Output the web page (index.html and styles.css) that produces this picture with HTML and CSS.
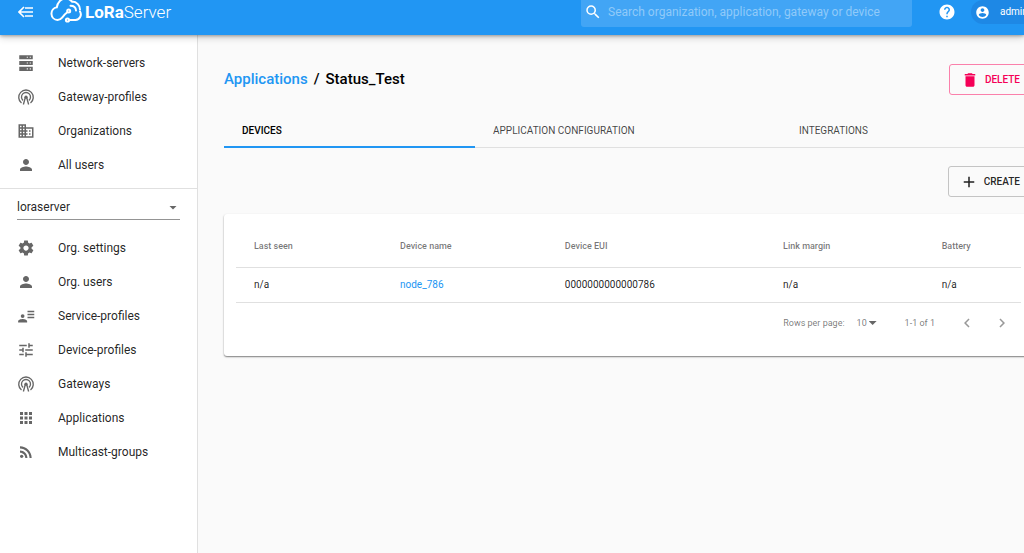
FILE: index.html
```html
<!DOCTYPE html>
<html lang="en">
<head>
<meta charset="utf-8">
<title>LoRaServer</title>
<link rel="stylesheet" href="styles.css">
</head>
<body>
<svg class="symbols" aria-hidden="true">
<symbol id="server" viewBox="0 0 24 24"><path fill-rule="evenodd" d="M3 1.500h18v5.500H3zM3 9.200h18v5.500H3zM3 17h18v5.500H3zM13 3.500v1.500h1.500V3.500zm4 0v1.500h1.500V3.500zM13 11.200v1.500h1.500v-1.500zm4 0v1.500h1.500v-1.500zM13 19v1.500h1.500V19zm4 0v1.500h1.500V19z"/></symbol>
<symbol id="radio" viewBox="0 0 24 24"><path d="M6 20A9.700 9.700 0 1 1 18 20M8 16.500A6 6 0 1 1 16 16.500M8.500 22l2.500-9M15.500 22L13 13" fill="none" stroke="currentColor" stroke-width="1.800"/><circle cx="12" cy="12.200" r="2.200"/></symbol>
<symbol id="building" viewBox="0 0 24 24"><path d="M12 7V3H2v18h20V7H12zM6 19H4v-2h2v2zm0-4H4v-2h2v2zm0-4H4V9h2v2zm0-4H4V5h2v2zm4 12H8v-2h2v2zm0-4H8v-2h2v2zm0-4H8V9h2v2zm0-4H8V5h2v2zm10 12h-8v-2h2v-2h-2v-2h2v-2h-2V9h8v10zm-2-8h-2v2h2v-2zm0 4h-2v2h2v-2z"/></symbol>
<symbol id="person" viewBox="0 0 24 24"><path d="M12 12c2.210 0 4-1.790 4-4s-1.790-4-4-4-4 1.790-4 4 1.790 4 4 4zm0 2c-2.670 0-8 1.340-8 4v2h16v-2c0-2.660-5.330-4-8-4z"/></symbol>
<symbol id="gear" viewBox="0 0 24 24"><path d="M19.430 12.980c.04-.32.07-.64.07-.98s-.03-.66-.07-.98l2.110-1.650c.19-.15.24-.42.12-.64l-2-3.460c-.12-.22-.39-.3-.61-.22l-2.490 1c-.52-.4-1.080-.73-1.690-.98l-.38-2.650C14.460 2.180 14.250 2 14 2h-4c-.25 0-.46.18-.49.42l-.38 2.650c-.61.25-1.170.59-1.690.98l-2.490-1c-.23-.09-.49 0-.61.22l-2 3.460c-.13.22-.07.49.12.64l2.110 1.650c-.04.32-.07.65-.07.98s.03.66.07.98l-2.110 1.650c-.19.15-.24.42-.12.64l2 3.460c.12.22.39.3.61.22l2.490-1c.52.4 1.080.73 1.690.98l.38 2.650c.03.24.24.42.49.42h4c.25 0 .46-.18.49-.42l.38-2.650c.61-.25 1.170-.59 1.690-.98l2.490 1c.23.09.49 0 .61-.22l2-3.460c.12-.22.07-.49-.12-.64l-2.110-1.650zM12 15.500c-1.930 0-3.500-1.570-3.500-3.500s1.570-3.500 3.500-3.500 3.500 1.570 3.500 3.500-1.570 3.500-3.500 3.500z"/></symbol>
<symbol id="account" viewBox="0 0 24 24"><circle cx="7.500" cy="12" r="2.500"/><path d="M1.500 20.500v-1.500c0-2 4-3 6-3s6 1 6 3v1.500zM14 5h9v2h-9zm0 4h9v2h-9zm0 4h9v2h-9z"/></symbol>
<symbol id="tune" viewBox="0 0 24 24"><path d="M3 17v2h6v-2H3zM3 5v2h10V5H3zm10 16v-2h8v-2h-8v-2h-2v6h2zM7 9v2H3v2h4v2h2V9H7zm14 4v-2H11v2h10zm-6-4h2V7h4V5h-4V3h-2v6z"/></symbol>
<symbol id="apps" viewBox="0 0 24 24"><path d="M4 8h4V4H4v4zm6 12h4v-4h-4v4zm-6 0h4v-4H4v4zm0-6h4v-4H4v4zm6 0h4v-4h-4v4zm6-10v4h4V4h-4zm-6 4h4V4h-4v4zm6 6h4v-4h-4v4zm0 6h4v-4h-4v4z"/></symbol>
<symbol id="feed" viewBox="0 0 24 24"><circle cx="6.180" cy="17.820" r="2.180"/><path d="M4 4.440v2.830c7.030 0 12.730 5.700 12.730 12.730h2.830c0-8.590-6.970-15.560-15.560-15.560zm0 5.660v2.830c3.900 0 7.070 3.170 7.070 7.070h2.830c0-5.470-4.430-9.900-9.900-9.900z"/></symbol>
</svg>
<header class="topbar">
  <button class="icon-button" aria-label="Toggle menu"><svg class="menu-icon outline" viewBox="0 0 16 12"><path d="M6 1L1 6l5 5M1.500 6H15M7 2h8M7 10h8" stroke-width="1.600"/></svg></button>
  <a class="brand" href="#">
    <svg class="brand-mark outline" viewBox="0 0 32 24" stroke-width="2" stroke-linecap="round"><path d="M7.500 20A6.400 6.400 0 0 1 6.800 7.300C7.500 2.500 11 -1.500 15.500 -1.500C18.500 -1.500 20.500 -.4 22 1.600M7.500 20C10.500 20 11 19 12.500 17.200C13.500 15.500 14 14.800 17.300 12.300M19.500 20H25.500A5.600 5.600 0 0 0 30 11.500M22 1.600C27 1.800 30 5.500 30 9.500M20.500 5.800C23.500 5.800 25.800 7.500 26 10.500"/><circle cx="18.700" cy="11" r="1.500"/><circle cx="17.500" cy="20" r="1.600"/></svg>
    <span class="brand-name"><b>LoRa</b>Server</span>
  </a>
  <label class="search">
    <svg class="search-icon" viewBox="0 0 24 24"><path d="M15.500 14h-.79l-.28-.27A6.470 6.470 0 0 0 16 9.500 6.500 6.500 0 1 0 9.500 16c1.610 0 3.090-.59 4.230-1.570l.27.28v.79l5 4.990L20.490 19l-4.990-5zm-6 0C7.010 14 5 11.990 5 9.500S7.010 5 9.500 5 14 7.010 14 9.500 11.990 14 9.500 14z"/></svg>
    <input class="search-input" type="text" aria-label="Search" placeholder="Search organization, application, gateway or device">
  </label>
  <button class="icon-button help" aria-label="Help"><svg class="icon" viewBox="0 0 24 24"><path d="M12 2C6.480 2 2 6.480 2 12s4.480 10 10 10 10-4.480 10-10S17.520 2 12 2zm1 17h-2v-2h2v2zm2.070-7.750l-.9.920C13.450 12.900 13 13.500 13 15h-2v-.5c0-1.100.45-2.100 1.170-2.830l1.240-1.260c.37-.36.59-.86.59-1.410 0-1.100-.9-2-2-2s-2 .9-2 2H8c0-2.210 1.790-4 4-4s4 1.790 4 4c0 .88-.36 1.680-.93 2.250z"/></svg></button>
  <button class="user-chip"><svg class="user-icon" viewBox="0 0 24 24"><path d="M12 2C6.480 2 2 6.480 2 12s4.480 10 10 10 10-4.480 10-10S17.520 2 12 2zm0 3c1.660 0 3 1.340 3 3s-1.340 3-3 3-3-1.340-3-3 1.340-3 3-3zm0 14.200c-2.500 0-4.710-1.280-6-3.220.03-1.990 4-3.080 6-3.080 1.990 0 5.970 1.090 6 3.080-1.290 1.940-3.500 3.220-6 3.220z"/></svg>admin</button>
</header>
<div class="layout">
  <nav class="sidebar">
    <div class="nav-group">
      <a class="nav-item" href="#"><svg class="icon"><use href="#server"/></svg>Network-servers</a>
      <a class="nav-item" href="#"><svg class="icon"><use href="#radio"/></svg>Gateway-profiles</a>
      <a class="nav-item" href="#"><svg class="icon"><use href="#building"/></svg>Organizations</a>
      <a class="nav-item" href="#"><svg class="icon"><use href="#person"/></svg>All users</a>
    </div>
    <div class="org-picker"><select class="org-select" aria-label="Organization"><option>loraserver</option></select><span class="caret"></span></div>
    <div class="nav-group">
      <a class="nav-item" href="#"><svg class="icon"><use href="#gear"/></svg>Org. settings</a>
      <a class="nav-item" href="#"><svg class="icon"><use href="#person"/></svg>Org. users</a>
      <a class="nav-item" href="#"><svg class="icon"><use href="#account"/></svg>Service-profiles</a>
      <a class="nav-item" href="#"><svg class="icon"><use href="#tune"/></svg>Device-profiles</a>
      <a class="nav-item" href="#"><svg class="icon"><use href="#radio"/></svg>Gateways</a>
      <a class="nav-item" href="#"><svg class="icon"><use href="#apps"/></svg>Applications</a>
      <a class="nav-item" href="#"><svg class="icon"><use href="#feed"/></svg>Multicast-groups</a>
    </div>
  </nav>
  <main class="main">
    <div class="title-bar">
      <h1 class="title"><a class="link" href="#">Applications</a><span>/</span><span>Status_Test</span></h1>
      <button class="button danger"><svg class="icon" viewBox="0 0 24 24"><path d="M6 19c0 1.100.9 2 2 2h8c1.100 0 2-.9 2-2V7H6v12zM19 4h-3.500l-1-1h-5l-1 1H5v2h14V4z"/></svg>DELETE</button>
    </div>
    <div class="tabs" role="tablist">
      <button class="tab active" role="tab">DEVICES</button>
      <button class="tab wide" role="tab">APPLICATION CONFIGURATION</button>
      <button class="tab" role="tab">INTEGRATIONS</button>
    </div>
    <div class="actions"><button class="button"><svg class="icon" viewBox="0 0 24 24"><path d="M19 13h-6v6h-2v-6H5v-2h6V5h2v6h6v2z"/></svg>CREATE</button></div>
    <section class="card">
      <table class="table">
        <thead><tr><th class="col-seen">Last seen</th><th class="col-name">Device name</th><th class="col-eui">Device EUI</th><th class="col-margin">Link margin</th><th class="col-battery">Battery</th></tr></thead>
        <tbody><tr><td>n/a</td><td><a class="link" href="#">node_786</a></td><td>0000000000000786</td><td>n/a</td><td>n/a</td></tr></tbody>
      </table>
      <div class="pager">
        <label for="rows">Rows per page:</label>
        <div class="rows-picker"><select class="rows-select" id="rows"><option>10</option></select><span class="caret"></span></div>
        <span class="range">1-1 of 1</span>
        <button class="icon-button" aria-label="Previous page"><svg class="icon" viewBox="0 0 24 24"><path d="M15.410 7.410L14 6l-6 6 6 6 1.410-1.410L10.830 12z"/></svg></button>
        <button class="icon-button" aria-label="Next page"><svg class="icon" viewBox="0 0 24 24"><path d="M10 6L8.590 7.410 13.170 12l-4.580 4.590L10 18l6-6z"/></svg></button>
      </div>
    </section>
  </main>
</div>
</body>
</html>
```
FILE: styles.css
```css
* { box-sizing: border-box; }
body {
  margin: 0;
  min-height: 100vh;
  display: flex;
  flex-direction: column;
  overflow: hidden;
  background: #fafafa;
  color: rgba(0, 0, 0, 0.87);
  font: 12px/16px Roboto, "Liberation Sans", sans-serif;
}
button, input, select { font: inherit; color: inherit; }
button { cursor: pointer; }
a { color: inherit; text-decoration: none; }
svg { fill: currentColor; flex: none; display: block; }
.outline { fill: none; stroke: currentColor; }
.symbols { position: absolute; width: 0; height: 0; }
.icon { width: 18px; height: 18px; }
.link { color: #2196f3; }
.icon-button { display: flex; padding: 0; border: 0; background: none; }

.topbar {
  position: relative;
  z-index: 1;
  display: flex;
  align-items: center;
  height: 35px;
  padding: 0 0 11px 18px;
  background: #2196f3;
  color: #fff;
  box-shadow: 0 1px 3px rgba(0, 0, 0, 0.3), 0 3px 7px rgba(0, 0, 0, 0.16);
}
.menu-icon { width: 16px; height: 12px; }
.brand { display: flex; align-items: center; gap: 3px; margin-left: 16px; }
.brand-mark { width: 32px; height: 24px; }
.brand-name { font-size: 17px; line-height: 24px; font-weight: 300; }
.brand-name b { font-weight: 700; }
.search {
  display: flex;
  align-items: center;
  gap: 6px;
  width: 331px;
  height: 30px;
  margin-left: auto;
  padding-left: 3px;
  border-radius: 3px;
  background: #42a5f5;
}
.search-icon { width: 18px; height: 18px; }
.search-input { flex: 1; min-width: 0; padding: 0; border: 0; outline: 0; background: none; }
.search-input::placeholder { color: #90caf9; opacity: 1; }
.help { margin-left: 26px; }
.user-chip {
  display: flex;
  align-items: center;
  gap: 10px;
  width: 76px;
  height: 24px;
  margin: 0 -23px 0 15px;
  padding: 0 4px;
  border: 0;
  border-radius: 12px;
  background: #1e88e5;
  font-size: 10px;
}
.user-icon { width: 15px; height: 15px; }

.layout { display: flex; flex: 1; }
.sidebar { flex: none; width: 198px; background: #fff; border-right: 1px solid #e0e0e0; }
.nav-group { padding: 11px 0 6px; }
.nav-item { display: flex; align-items: center; gap: 23px; height: 34px; padding-left: 17px; }
.nav-item .icon { color: #666; }
.org-picker {
  display: flex;
  align-items: center;
  padding: 6px 17px 0;
  border-top: 1px solid #e0e0e0;
}
.org-select {
  flex: 1;
  height: 25px;
  padding: 0;
  appearance: none;
  border: 0;
  border-bottom: 1px solid #949494;
  border-radius: 0;
  background: none;
}
.caret {
  width: 8px;
  height: 4px;
  margin: 0 3px 0 -11px;
  background: #666;
  clip-path: polygon(0 0, 100% 0, 50% 100%);
  pointer-events: none;
}

.main { flex: 1; min-width: 0; margin-right: -8px; padding: 29px 0 0 26px; }
.title-bar { display: flex; justify-content: space-between; height: 31px; }
.title { display: flex; gap: 5px; margin: 0; font-size: 15px; line-height: 30px; font-weight: 500; color: #000; }
.button {
  display: flex;
  align-items: center;
  gap: 6px;
  height: 31px;
  padding: 0 11px;
  border: 1px solid #c4c4c4;
  border-radius: 3px;
  background: none;
  font-size: 10px;
  font-weight: 500;
}
.danger { color: #f50057; border-color: #fa80ab; }
.tabs { display: flex; margin-top: 17px; border-bottom: 1px solid #e0e0e0; }
.tab {
  flex: 1 1 118px;
  height: 36px;
  margin-bottom: -1px;
  padding: 4px 18px 0;
  border: 0;
  border-bottom: 2px solid transparent;
  background: none;
  color: rgba(0, 0, 0, 0.74);
  font-size: 10px;
  text-align: left;
}
.title { gap: 6px; }
.wide { flex-basis: 173px; }
.active { color: #000; font-weight: 500; border-bottom-color: #2196f3; }
.actions { display: flex; justify-content: flex-end; margin: 18px 0 17px; }
.card {
  padding: 12px 11px 12px 12px;
  border-radius: 3px;
  background: #fff;
  box-shadow: 0 1px 2px rgba(0, 0, 0, 0.35), 0 1px 1px rgba(0, 0, 0, 0.2);
}
.table { width: 100%; border-collapse: collapse; font-size: 10px; }
.table th, .table td { padding: 0 0 0 18px; border-bottom: 1px solid #e0e0e0; text-align: left; }
.table th { height: 41px; font-size: 9px; font-weight: 500; color: rgba(0, 0, 0, 0.54); }
.table td { height: 35px; }
.col-seen { width: 18.6%; }
.col-name { width: 21%; }
.col-eui { width: 27.8%; }
.col-margin { width: 20.2%; }
.pager {
  display: flex;
  align-items: center;
  justify-content: flex-end;
  height: 41px;
  padding-right: 10px;
  font-size: 9px;
  color: rgba(0, 0, 0, 0.54);
}
.pager .icon-button { margin-left: 17px; color: #999; }
.pager .icon-button:first-of-type { margin-left: 23px; }
.rows-picker { display: flex; align-items: center; margin-left: 12px; }
.rows-select { width: 20px; padding: 0; appearance: none; border: 0; background: none; }
.rows-picker .caret { margin: 0 0 0 -8px; }
.range { margin-left: 28px; }
```
